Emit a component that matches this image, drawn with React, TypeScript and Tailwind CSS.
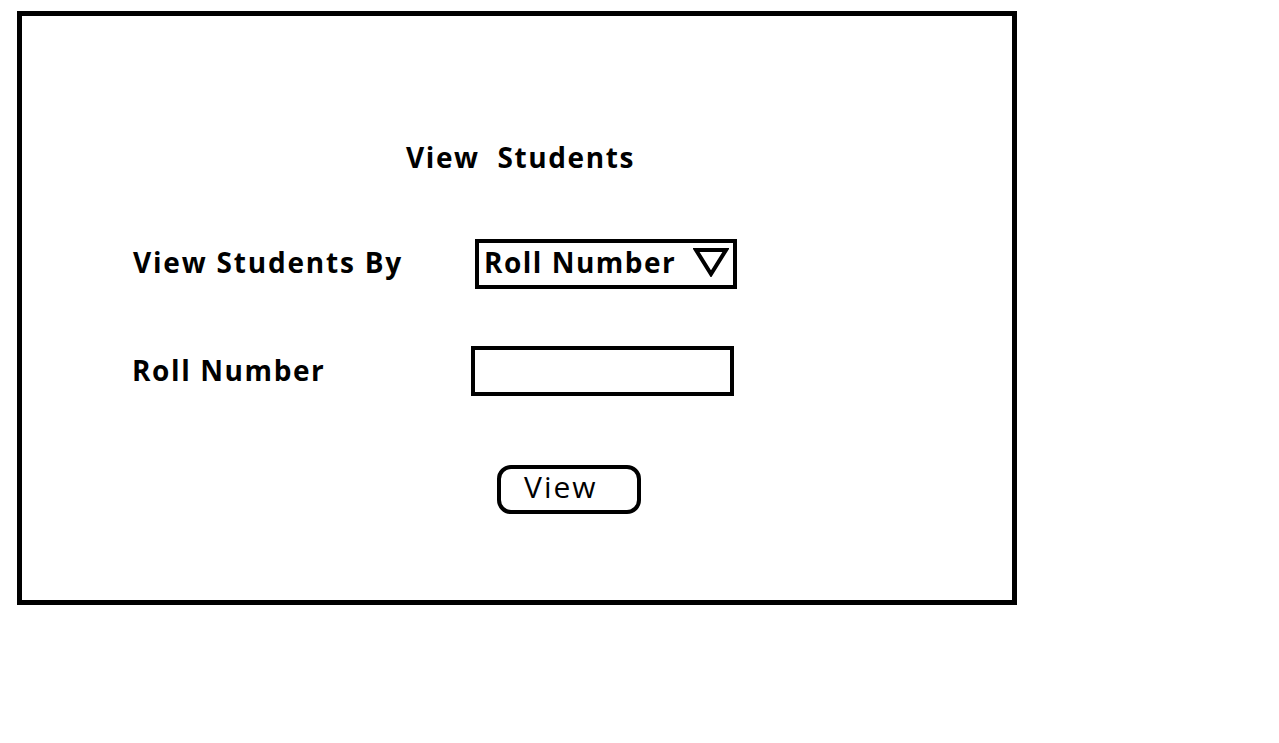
export default function App() {
  return (
    <div className="min-h-screen w-full bg-white pt-[11px] pl-[17px]" style={{ fontFamily: '"Open Sans", "Noto Sans", sans-serif' }}>
      <div className="w-[1000px] h-[594px] border-[5px] border-black flex flex-col">
        <h1 className="mt-[122px] ml-[384px] text-[28px] leading-[38px] font-bold text-black tracking-[1.6px]">
          View&nbsp; Students
        </h1>

        <div className="mt-[63px] flex items-center">
          <span className="ml-[111px] w-[342px] text-[28px] font-bold text-black leading-[38px] tracking-[1.8px] -mt-[4px]">View Students By</span>
          <div className="w-[262px] h-[50px] border-[4px] border-black flex items-center justify-between pl-[5px] pr-[4px]">
            <span className="text-[28px] font-bold leading-[38px] text-black tracking-[1.5px] -mt-[4px]">Roll Number</span>
            <svg width="36" height="30" viewBox="0 0 36 30" className="-mt-[4px]">
              <polygon points="3,3 33,3 18,27" fill="none" stroke="black" strokeWidth="4" strokeLinejoin="miter" />
            </svg>
          </div>
        </div>

        <div className="mt-[57px] flex items-center">
          <span className="ml-[110px] w-[339px] text-[28px] font-bold text-black leading-[38px] tracking-[1.6px] -mt-[2px]">Roll Number</span>
          <div className="w-[263px] h-[50px] border-[4px] border-black" />
        </div>

        <div className="mt-[69px] ml-[475px]">
          <button className="w-[144px] h-[49px] border-[4px] border-black rounded-[14px] flex items-center pl-[23px] text-[30px] leading-[38px] text-black tracking-[2px]">
            <span className="-mt-[6px]">View</span>
          </button>
        </div>
      </div>
    </div>
  )
}
